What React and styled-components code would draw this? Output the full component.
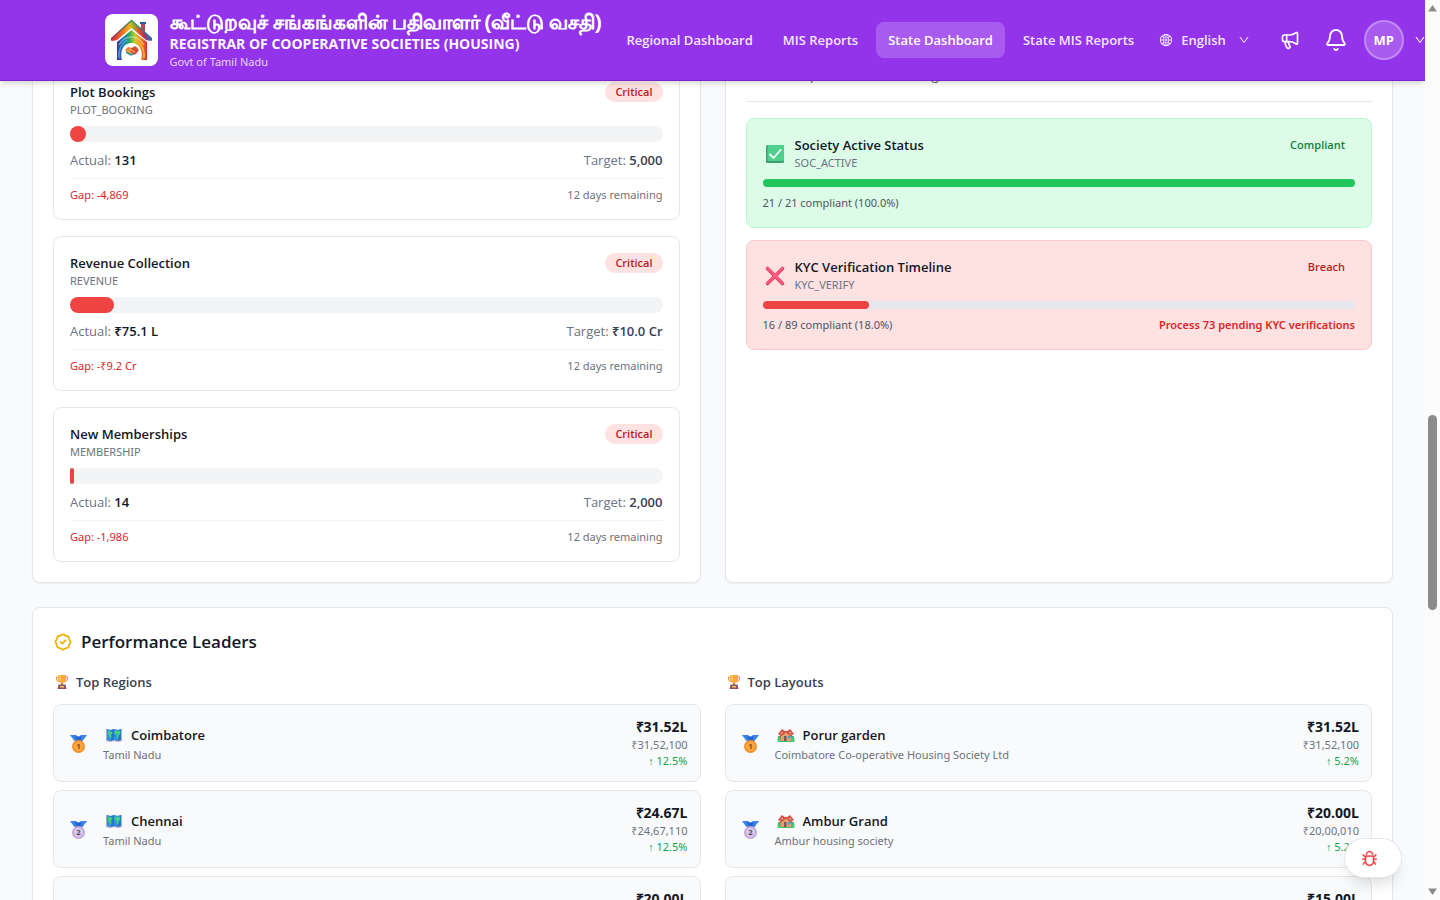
import React from "react";
import styled, { createGlobalStyle } from "styled-components";
import { Bell, Megaphone } from "lucide-react";
import { AiOutlineBug, AiOutlineDown, AiOutlineGlobal } from "react-icons/ai";
import { HiOutlineBadgeCheck } from "react-icons/hi";

const GlobalStyle = createGlobalStyle`
  * {
    box-sizing: border-box;
  }

  body {
    margin: 0;
    background: #f9fafb;
    color: #111827;
    font-family: "Open Sans", "Noto Sans", sans-serif;
    font-size: 13px;
    line-height: 20px;
  }

  h1, h2, h3, p {
    margin: 0;
    font-size: inherit;
    font-weight: inherit;
  }

  button {
    font: inherit;
    color: inherit;
    background: none;
    border: 0;
    padding: 0;
    cursor: pointer;
  }

  svg {
    display: block;
    flex-shrink: 0;
  }
`;

const smallFont = `"Noto Sans", "Open Sans", sans-serif`;

const Shell = styled.div`
  display: grid;
  grid-template-columns: minmax(0, 1fr) 15px;
  height: 100vh;
`;

const Page = styled.div`
  position: relative;
  overflow: hidden;
`;

/* header */

const Header = styled.header`
  position: absolute;
  top: 0;
  left: 0;
  right: 0;
  z-index: 10;
  background: #9333ea;
  border-bottom: 1px solid #7e22ce;
  box-shadow: 0 4px 6px -1px rgba(0, 0, 0, 0.1), 0 2px 4px -2px rgba(0, 0, 0, 0.1);
`;

const HeaderClip = styled.div`
  overflow: hidden;
`;

const HeaderInner = styled.div`
  display: flex;
  align-items: center;
  max-width: 1280px;
  height: 80px;
  margin: 0 auto;
  padding: 0 32px;
  white-space: nowrap;

  & > * {
    flex-shrink: 0;
  }
`;

const Logo = styled.div`
  display: flex;
  align-items: center;
  justify-content: center;
  width: 53px;
  height: 52px;
  margin-right: 12px;
  border-radius: 8px;
  background: #fff;
`;

const Brand = styled.div`
  width: 445px;
  color: #fff;

  h1 {
    font-size: 20px;
    line-height: 24px;
    font-weight: 400;
    -webkit-text-stroke: 1px #fff;
  }

  h2 {
    font-size: 14px;
    font-weight: 700;
    color: #faf5ff;
  }

  p {
    font-family: ${smallFont};
    font-size: 11px;
    line-height: 16px;
    color: #e9d5ff;
  }
`;

const Nav = styled.nav`
  display: flex;
  gap: 6px;
`;

const NavLink = styled.a`
  padding: 8px 12px;
  border-radius: 8px;
  font-weight: 600;
  text-decoration: none;
  color: ${({ $active }) => ($active ? "#fff" : "#f3e8ff")};
  background: ${({ $active }) => ($active ? "rgba(255, 255, 255, 0.2)" : "none")};
`;

const Language = styled.button`
  display: flex;
  align-items: center;
  gap: 8px;
  margin-left: 13px;
  font-weight: 600;
  color: #f3e8ff;

  svg:last-child {
    margin-left: 4px;
  }
`;

const IconButton = styled.button`
  margin-left: ${({ $gap }) => $gap}px;
  color: #fff;
`;

const Account = styled.button`
  display: flex;
  align-items: center;
  gap: 10px;
  margin-left: 16px;
  color: #fff;
`;

const Avatar = styled.span`
  display: flex;
  align-items: center;
  justify-content: center;
  width: 40px;
  height: 40px;
  border: 2px solid rgba(255, 255, 255, 0.3);
  border-radius: 50%;
  background: rgba(255, 255, 255, 0.2);
  font-weight: 700;
`;

/* content */

const Main = styled.main`
  display: flex;
  flex-direction: column;
  gap: 24px;
  padding: 44px 32px 0;
`;

const Columns = styled.div`
  display: grid;
  grid-template-columns: repeat(2, minmax(0, 1fr));
  gap: 24px;
`;

const Panel = styled.section`
  padding: 20px;
  border: 1px solid #e5e7eb;
  border-radius: 8px;
  background: #fff;
  box-shadow: 0 1px 2px rgba(0, 0, 0, 0.05);
`;

const Stack = styled.div`
  display: flex;
  flex-direction: column;
  gap: ${({ $gap }) => $gap}px;
`;

const Row = styled.div`
  display: flex;
  align-items: flex-start;
  justify-content: space-between;
`;

const Card = styled.article`
  padding: 16px;
  border: 1px solid ${({ $border }) => $border || "#e5e7eb"};
  border-radius: 8px;
  background: ${({ $bg }) => $bg || "#fff"};
`;

const Name = styled.h3`
  font-weight: 600;
`;

const Code = styled.p`
  font-family: ${smallFont};
  font-size: 11px;
  line-height: 16px;
  color: #6b7280;
`;

const Badge = styled.span`
  padding: 2px 10px;
  border-radius: 10px;
  font-size: 11px;
  line-height: 16px;
  font-weight: 600;
  color: ${({ $color }) => $color};
  background: ${({ $bg }) => $bg || "none"};
`;

const Track = styled.div`
  height: ${({ $size }) => $size}px;
  margin: 8px 0;
  border-radius: 9999px;
  background: ${({ $size }) => ($size > 8 ? "#f3f4f6" : "#e5e7eb")};
`;

const Fill = styled.div`
  height: 100%;
  border-radius: 9999px;
  background: ${({ $color }) => $color};
`;

const Figure = styled.p`
  color: #6b7280;

  strong {
    font-weight: 600;
    color: ${({ $strong }) => $strong};
  }
`;

const CardFooter = styled(Row)`
  margin-top: 8px;
  padding-top: 8px;
  border-top: 1px solid #f3f4f6;
  font-family: ${smallFont};
  font-size: 11px;
  line-height: 16px;
  color: #6b7280;
`;

const Gap = styled.span`
  color: #dc2626;
`;

const Intro = styled.p`
  padding-bottom: 16px;
  margin-bottom: 16px;
  border-bottom: 1px solid #e5e7eb;
  color: #4b5563;
`;

const Rule = styled.div`
  display: flex;
  align-items: center;
  gap: 8px;
`;

const RuleFooter = styled(Row)`
  font-family: ${smallFont};
  font-size: 11px;
  line-height: 16px;
  color: #4b5563;

  strong {
    font-weight: 600;
    color: #dc2626;
  }
`;

const PanelTitle = styled.h2`
  display: flex;
  align-items: center;
  gap: 8px;
  margin-bottom: 16px;
  font-size: 17px;
  line-height: 28px;
  font-weight: 600;

  svg {
    color: #eab308;
  }
`;

const ListTitle = styled.h3`
  display: flex;
  align-items: center;
  gap: 5px;
  margin-bottom: 12px;
  font-weight: 600;
  color: #374151;
`;

const Leader = styled.article`
  display: flex;
  align-items: center;
  gap: 12px;
  padding: 12px;
  border: 1px solid #e5e7eb;
  border-radius: 8px;
  background: #f9fafb;
`;

const LeaderInfo = styled.div`
  flex: 1;

  h4 {
    display: flex;
    align-items: center;
    gap: 6px;
    margin: 0;
    font-size: 13px;
    line-height: 24px;
    font-weight: 600;
  }
`;

const LeaderTotals = styled.div`
  text-align: right;
  font-family: ${smallFont};
  font-size: 11px;
  line-height: 16px;
  color: #6b7280;

  strong {
    display: block;
    font-family: "Open Sans", sans-serif;
    font-size: 14px;
    line-height: 20px;
    font-weight: 700;
    color: #111827;
  }

  em {
    font-style: normal;
    color: #16a34a;
  }
`;

const BugButton = styled.button`
  position: absolute;
  right: 24px;
  bottom: 23px;
  z-index: 5;
  display: flex;
  align-items: center;
  width: 56px;
  height: 38px;
  padding-left: 16px;
  border-radius: 19px;
  background: #fff;
  color: #ef4444;
  box-shadow: 0 0 0 1px #e5e7eb, 0 10px 15px -3px rgba(0, 0, 0, 0.12), 0 4px 6px -4px rgba(0, 0, 0, 0.1);

  svg {
    stroke-width: 20px;
  }
`;

/* scroll rail */

const Rail = styled.div`
  display: flex;
  flex-direction: column;
  align-items: center;
  padding: 4px 0;
  background: #fcfcfc;
`;

const Spacer = styled.div`
  flex: ${({ $grow }) => $grow} 0 0;
`;

const Thumb = styled.div`
  flex: 195 0 0;
  width: 9px;
  border-radius: 5px;
  background: #8b8b8b;
`;

/* drawings */

const HouseLogo = () => (
  <svg width="43" height="44" viewBox="0 0 43 44">
    <defs>
      <linearGradient id="roof" x1="0" x2="1">
        <stop offset="0" stopColor="#d9263c" />
        <stop offset="0.25" stopColor="#ee6a24" />
        <stop offset="0.45" stopColor="#f0b41c" />
        <stop offset="0.55" stopColor="#8fb52e" />
        <stop offset="0.68" stopColor="#e8502a" />
        <stop offset="0.82" stopColor="#b5305a" />
        <stop offset="1" stopColor="#2377c8" />
      </linearGradient>
      <linearGradient id="roofTop" x1="0" x2="1">
        <stop offset="0" stopColor="#a02860" />
        <stop offset="0.5" stopColor="#3f9a4a" />
        <stop offset="1" stopColor="#2a62b8" />
      </linearGradient>
      <linearGradient id="wall" x1="0" x2="1">
        <stop offset="0" stopColor="#4d2d90" />
        <stop offset="0.2" stopColor="#1f7bc4" />
        <stop offset="0.4" stopColor="#29a65a" />
        <stop offset="0.6" stopColor="#c3cf2c" />
        <stop offset="0.8" stopColor="#f58a1f" />
        <stop offset="1" stopColor="#d92a32" />
      </linearGradient>
    </defs>
    <path d="M31 6h4v9l-4-4z" fill="#b54a4a" />
    <path d="M30 4h6v2h-6z" fill="#2c5f9e" />
    <path d="M21.500 1.500 1 20v3l20.500-17L42 23v-3z" fill="url(#roofTop)" />
    <path d="M21.500 3.500 1.500 21.500l1 1.500L7 22 21.500 10 36 22l4.500 1 1-1.500z" fill="url(#roof)" />
    <path d="M21.500 12 7 24v18h5c-1-3-1-7 0-10 2-5 5-7 9.500-7s7.500 2 9.500 7c1 3 1 7 0 10h6V24z" fill="url(#wall)" />
    <path d="M9 27c3-5 7-8 12.500-8S31 22 34 27" fill="none" stroke="#fff" strokeWidth="0.800" opacity="0.700" />
    <path d="M9 40c-1-8 3-16 9-18" fill="none" stroke="#35a6c8" strokeWidth="1.500" />
    <path d="M34 40c1-8-3-16-9-18" fill="none" stroke="#f9b233" strokeWidth="1.500" />
    <path d="m15 32 3-3 4 1 5-1 1 3-4 4-4 1z" fill="#ee7b2d" />
    <path d="m22 30 3-2 4 4-3 4-3 1-3-3z" fill="#d9483d" />
    <path d="m17 32 6 4M19 31l6 3" stroke="#f8c463" />
    <path d="m16 34 5 3 2-1" fill="none" stroke="#2b9aa8" strokeWidth="1.500" />
  </svg>
);

const CheckMark = () => (
  <svg width="24" height="24" viewBox="0 0 24 24">
    <rect x="3" y="4" width="18" height="18" rx="1.500" fill="#3c9f73" />
    <rect x="4.500" y="4" width="16.500" height="16" rx="1" fill="#4fd08c" />
    <path d="m6.500 13 4 4 7.500-8.500" fill="none" stroke="#fff" strokeWidth="1.800" />
  </svg>
);

const CrossMark = () => (
  <svg width="24" height="24" viewBox="0 0 24 24">
    <path d="m4.500 5.500 15 15m0-15-15 15" stroke="#e0405f" strokeWidth="3.600" strokeLinecap="round" />
    <path d="m4.500 5 15 15m0-15-15 15" stroke="#ff5a80" strokeWidth="2.400" strokeLinecap="round" />
  </svg>
);

const Trophy = () => (
  <svg width="18" height="18" viewBox="0 0 18 18">
    <path d="M5 4H3.500v2C3.500 8 5 8.500 6 8.500M13 4h1.500v2c0 2-1.500 2.500-2.500 2.500" fill="none" stroke="#e8933a" />
    <path d="M5 2h8v4.500C13 9 11 10 9 10S5 9 5 6.500z" fill="#f9a73e" />
    <path d="M6 2.500h2V8C6.500 7.500 6 6.500 6 5z" fill="#ffd05c" />
    <path d="M8 10h2v2H8z" fill="#d77f35" />
    <path d="M5.500 11.500h7l1 4.500h-9z" fill="#8d4f63" />
    <path d="M7 13h4v1.500H7z" fill="#f9c24a" />
  </svg>
);

const Medal = ({ rank }) => {
  const gold = rank === 1;
  return (
    <svg width="25" height="24" viewBox="0 0 25 24">
      <path d="M4 4h6l2.500 2L15 4h6l-4.500 6h-8z" fill="#3b82ea" />
      <path d="M9 5.500h7l-2 4h-3z" fill="#2563c9" />
      <circle cx="12.500" cy="15.500" r="6.500" fill={gold ? "#f08e2c" : "#bfa5dc"} />
      <circle cx="12.500" cy="15.500" r="4.800" fill={gold ? "#fda63c" : "#d7c6ea"} />
      <text
        x="12.500"
        y="18"
        textAnchor="middle"
        fontSize="7"
        fontWeight="700"
        fill={gold ? "#6f3f2e" : "#4b4658"}
      >
        {rank}
      </text>
    </svg>
  );
};

const MapIcon = () => (
  <svg width="22" height="20" viewBox="0 0 22 20">
    <path d="m3 4 4 1 4-1 4 1 4-1v12l-4 1-4-1-4 1-4-1z" fill="#b7a9d6" />
    <path d="m4 4 3.500 1v11L4 15z" fill="#2f8fe0" />
    <path d="M7.500 5 11 4v11l-3.500 1z" fill="#1e78cc" />
    <path d="m11 4 3.500 1v11L11 15z" fill="#2f8fe0" />
    <path d="M14.500 5 18 4v11l-3.500 1z" fill="#1e78cc" />
    <path d="m5 6 4 .5.500 2L8 10l.5 2-1 2-1.500-3L5 9zM11.500 6 17 5.500 17.500 9 16 10l-1 3.500-1.500-1 .5-2.500-2.500-1z" fill="#41ce86" />
  </svg>
);

const HouseIcon = () => (
  <svg width="22" height="20" viewBox="0 0 22 20">
    <path d="M3 11h16v6H3z" fill="#3cbf68" />
    <path d="M5 8h12v8H5z" fill="#c98a63" />
    <path d="m3 9 4-5 4 3 4-3 4 5-1.500 1L15 7l-4 3-4-3-2.500 3z" fill="#d5503f" />
    <path d="m6 11 5-4.500 5 4.500v5H6z" fill="#e0a070" />
    <path d="m5 11.500 6-5 6 5" fill="none" stroke="#d5503f" strokeWidth="1.500" />
    <path d="M9 11h2.500v5H9z" fill="#7b5a57" />
    <path d="M13 11h2.500v2.500H13z" fill="#35a9e8" />
    <path d="M2.500 13 5 15v2H2.500zM19.500 13 17 15v2h2.500z" fill="#42d37a" />
  </svg>
);

const navItems = ["Regional Dashboard", "MIS Reports", "State Dashboard", "State MIS Reports"];

const targets = [
  { name: "Plot Bookings", code: "PLOT_BOOKING", progress: 2.62, actual: "131", target: "5,000", gap: "-4,869" },
  { name: "Revenue Collection", code: "REVENUE", progress: 7.5, actual: "₹75.1 L", target: "₹10.0 Cr", gap: "-₹9.2 Cr" },
  { name: "New Memberships", code: "MEMBERSHIP", progress: 0.7, actual: "14", target: "2,000", gap: "-1,986" }
];

const regions = [
  { name: "Coimbatore", place: "Tamil Nadu", short: "₹31.52L", full: "₹31,52,100", growth: "12.5%" },
  { name: "Chennai", place: "Tamil Nadu", short: "₹24.67L", full: "₹24,67,110", growth: "12.5%" },
  { name: "Madurai", place: "Tamil Nadu", short: "₹20.00L", full: "₹20,00,010", growth: "12.5%" }
];

const layouts = [
  { name: "Porur garden", place: "Coimbatore Co-operative Housing Society Ltd", short: "₹31.52L", full: "₹31,52,100", growth: "5.2%" },
  { name: "Ambur Grand", place: "Ambur housing society", short: "₹20.00L", full: "₹20,00,010", growth: "5.2%" },
  { name: "Anna Nagar", place: "Chennai housing society", short: "₹15.00L", full: "₹15,00,000", growth: "5.2%" }
];

function TargetCard({ item: { name, code, progress, actual, target, gap } }) {
  return (
    <Card>
      <Row>
        <div>
          <Name>{name}</Name>
          <Code>{code}</Code>
        </div>
        <Badge $color="#b91c1c" $bg="#fee2e2">
          Critical
        </Badge>
      </Row>
      <Track $size={16}>
        <Fill $color="#ef4444" style={{ width: `${progress}%` }} />
      </Track>
      <Row>
        <Figure $strong="#111827">
          Actual: <strong>{actual}</strong>
        </Figure>
        <Figure $strong="#374151">
          Target: <strong>{target}</strong>
        </Figure>
      </Row>
      <CardFooter>
        <Gap>Gap: {gap}</Gap>
        <span>12 days remaining</span>
      </CardFooter>
    </Card>
  );
}

function ComplianceCard({ icon, name, code, ok, progress, summary, action }) {
  return (
    <Card $bg={ok ? "#dcfce7" : "#fee2e2"} $border={ok ? "#bbf7d0" : "#fecaca"}>
      <Row>
        <Rule>
          {icon}
          <div>
            <Name>{name}</Name>
            <Code>{code}</Code>
          </div>
        </Rule>
        <Badge $color={ok ? "#15803d" : "#b91c1c"}>{ok ? "Compliant" : "Breach"}</Badge>
      </Row>
      <Track $size={8}>
        <Fill $color={ok ? "#22c55e" : "#ef4444"} style={{ width: `${progress}%` }} />
      </Track>
      <RuleFooter>
        <span>{summary}</span>
        {action && <strong>{action}</strong>}
      </RuleFooter>
    </Card>
  );
}

function LeaderList({ title, items, icon }) {
  return (
    <div>
      <ListTitle>
        <Trophy />
        {title}
      </ListTitle>
      <Stack $gap={8}>
        {items.map((item, index) => (
          <Leader key={item.name}>
            <Medal rank={index + 1} />
            <LeaderInfo>
              <h4>
                {icon}
                {item.name}
              </h4>
              <Code>{item.place}</Code>
            </LeaderInfo>
            <LeaderTotals>
              <strong>{item.short}</strong>
              <div>{item.full}</div>
              <em>↑ {item.growth}</em>
            </LeaderTotals>
          </Leader>
        ))}
      </Stack>
    </div>
  );
}

export default function App() {
  return (
    <Shell>
      <GlobalStyle />
      <Page>
        <Header>
          <HeaderClip>
            <HeaderInner>
              <Logo>
                <HouseLogo />
              </Logo>
              <Brand>
                <h1 lang="ta">கூட்டுறவுச் சங்கங்களின் பதிவாளர் (வீட்டு வசதி)</h1>
                <h2>REGISTRAR OF COOPERATIVE SOCIETIES (HOUSING)</h2>
                <p>Govt of Tamil Nadu</p>
              </Brand>
              <Nav>
                {navItems.map(label => (
                  <NavLink key={label} href="#" $active={label === "State Dashboard"}>
                    {label}
                  </NavLink>
                ))}
              </Nav>
              <Language>
                <AiOutlineGlobal size={14} />
                English
                <AiOutlineDown size={12} />
              </Language>
              <IconButton $gap={30} aria-label="Announcements">
                <Megaphone size={20} />
              </IconButton>
              <IconButton $gap={24} aria-label="Notifications">
                <Bell size={24} strokeWidth={1.8} />
              </IconButton>
              <Account aria-label="Account">
                <Avatar>MP</Avatar>
                <AiOutlineDown size={12} />
              </Account>
            </HeaderInner>
          </HeaderClip>
        </Header>

        <Main>
          <Columns>
            <Panel>
              <Stack $gap={16}>
                {targets.map(item => (
                  <TargetCard key={item.code} item={item} />
                ))}
              </Stack>
            </Panel>
            <Panel>
              <Intro>SLA & compliance rules tracking</Intro>
              <Stack $gap={12}>
                <ComplianceCard
                  ok
                  icon={<CheckMark />}
                  name="Society Active Status"
                  code="SOC_ACTIVE"
                  progress={100}
                  summary="21 / 21 compliant (100.0%)"
                />
                <ComplianceCard
                  icon={<CrossMark />}
                  name="KYC Verification Timeline"
                  code="KYC_VERIFY"
                  progress={18}
                  summary="16 / 89 compliant (18.0%)"
                  action="Process 73 pending KYC verifications"
                />
              </Stack>
            </Panel>
          </Columns>

          <Panel>
            <PanelTitle>
              <HiOutlineBadgeCheck size={20} />
              Performance Leaders
            </PanelTitle>
            <Columns>
              <LeaderList title="Top Regions" items={regions} icon={<MapIcon />} />
              <LeaderList title="Top Layouts" items={layouts} icon={<HouseIcon />} />
            </Columns>
          </Panel>
        </Main>

        <BugButton aria-label="Report a bug">
          <AiOutlineBug size={17} />
        </BugButton>
      </Page>

      <Rail aria-hidden="true">
        <svg width="9" height="9" viewBox="0 0 9 9">
          <path d="M4.500 1 9 7.500H0z" fill="#8b8b8b" />
        </svg>
        <Spacer $grow={402} />
        <Thumb />
        <Spacer $grow={277} />
        <svg width="9" height="9" viewBox="0 0 9 9">
          <path d="M4.500 8 9 1.500H0z" fill="#8b8b8b" />
        </svg>
      </Rail>
    </Shell>
  );
}
